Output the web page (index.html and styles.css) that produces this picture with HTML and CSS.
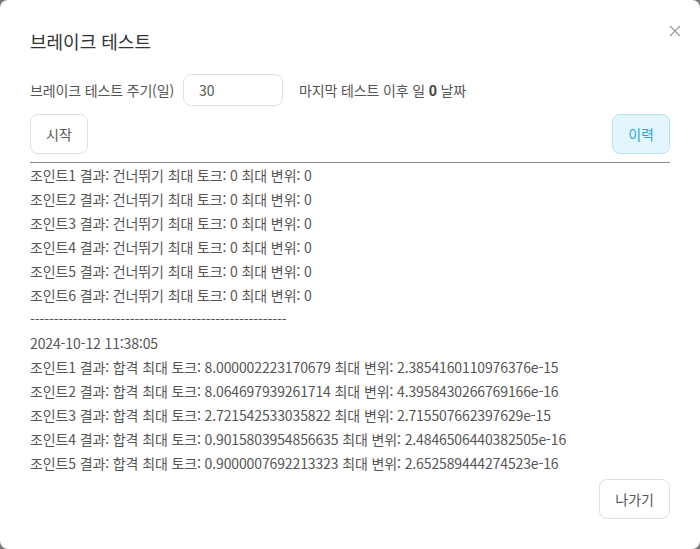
FILE: index.html
```html
<!DOCTYPE html>
<html lang="ko">
<head>
    <meta charset="UTF-8">
    <meta name="viewport" content="width=device-width, initial-scale=1.0">
    <title>브레이크 테스트</title>
    <link rel="stylesheet" href="styles.css">
</head>
<body>
    <div class="dialog">
        <button class="close" type="button" aria-label="닫기">
            <svg width="12" height="12" viewBox="0 0 12 12">
                <path d="M1 1 L11 11 M11 1 L1 11" stroke="#999" stroke-width="1.2" fill="none"/>
            </svg>
        </button>

        <h2 class="title">브레이크 테스트</h2>

        <div class="setting-row">
            <label for="period">브레이크 테스트 주기(일)</label>
            <input type="text" id="period" class="period-input" value="30">
            <span class="last-test">마지막 테스트 이후 일 <b>0</b> 날짜</span>
        </div>

        <div class="action-row">
            <button class="btn" type="button">시작</button>
            <button class="btn btn-history" type="button">이력</button>
        </div>

        <div class="log">
            <div>조인트1 결과: 건너뛰기 최대 토크: 0 최대 변위: 0</div>
            <div>조인트2 결과: 건너뛰기 최대 토크: 0 최대 변위: 0</div>
            <div>조인트3 결과: 건너뛰기 최대 토크: 0 최대 변위: 0</div>
            <div>조인트4 결과: 건너뛰기 최대 토크: 0 최대 변위: 0</div>
            <div>조인트5 결과: 건너뛰기 최대 토크: 0 최대 변위: 0</div>
            <div>조인트6 결과: 건너뛰기 최대 토크: 0 최대 변위: 0</div>
            <div>------------------------------------------------------</div>
            <div>2024-10-12 11:38:05</div>
            <div>조인트1 결과: 합격 최대 토크: 8.000002223170679 최대 변위: 2.3854160110976376e-15</div>
            <div>조인트2 결과: 합격 최대 토크: 8.064697939261714 최대 변위: 4.3958430266769166e-16</div>
            <div>조인트3 결과: 합격 최대 토크: 2.721542533035822 최대 변위: 2.715507662397629e-15</div>
            <div>조인트4 결과: 합격 최대 토크: 0.9015803954856635 최대 변위: 2.4846506440382505e-16</div>
            <div>조인트5 결과: 합격 최대 토크: 0.9000007692213323 최대 변위: 2.652589444274523e-16</div>
        </div>

        <div class="footer">
            <button class="btn" type="button">나가기</button>
        </div>
    </div>
</body>
</html>
```

FILE: styles.css
```css
body {
    margin: 0;
    background: #7a7a7a;
    font-family: "Noto Sans CJK KR", "Noto Sans", sans-serif;
    color: #555;
}

.dialog {
    position: relative;
    box-sizing: border-box;
    width: 700px;
    height: 549px;
    padding: 28px 30px 0;
    background: #fff;
    border-radius: 8px;
}

.close {
    position: absolute;
    top: 25px;
    right: 19px;
    width: 12px;
    height: 12px;
    padding: 0;
    border: none;
    background: none;
    cursor: pointer;
    display: flex;
}

.title {
    margin: 0;
    font-size: 18px;
    font-weight: 400;
    line-height: 26px;
    color: #333;
}

.setting-row {
    display: flex;
    align-items: center;
    margin-top: 20px;
    font-size: 14px;
    letter-spacing: -0.15px;
}

.period-input {
    box-sizing: border-box;
    width: 100px;
    height: 32px;
    margin: 0 16px 0 9px;
    padding: 0 15px;
    border: 1px solid #dcdfe6;
    border-radius: 8px;
    font-family: inherit;
    font-size: 14px;
    color: #555;
    outline: none;
}

.last-test b {
    font-weight: 700;
    color: #444;
}

.action-row {
    display: flex;
    justify-content: space-between;
    margin-top: 8px;
    padding-bottom: 8px;
    border-bottom: 1px solid #888;
}

.btn {
    box-sizing: border-box;
    height: 40px;
    padding: 0 15px;
    border: 1px solid #dcdfe6;
    border-radius: 8px;
    background: #fff;
    font-family: inherit;
    font-size: 14px;
    color: #555;
    cursor: pointer;
}

.btn-history {
    background: #e3f6fe;
    border-color: #b5e4f8;
    color: #2aa8e0;
}

.log {
    font-size: 14px;
    line-height: 24px;
    letter-spacing: -0.12px;
    white-space: nowrap;
}

.footer {
    display: flex;
    justify-content: flex-end;
    margin-top: 4px;
}
```
